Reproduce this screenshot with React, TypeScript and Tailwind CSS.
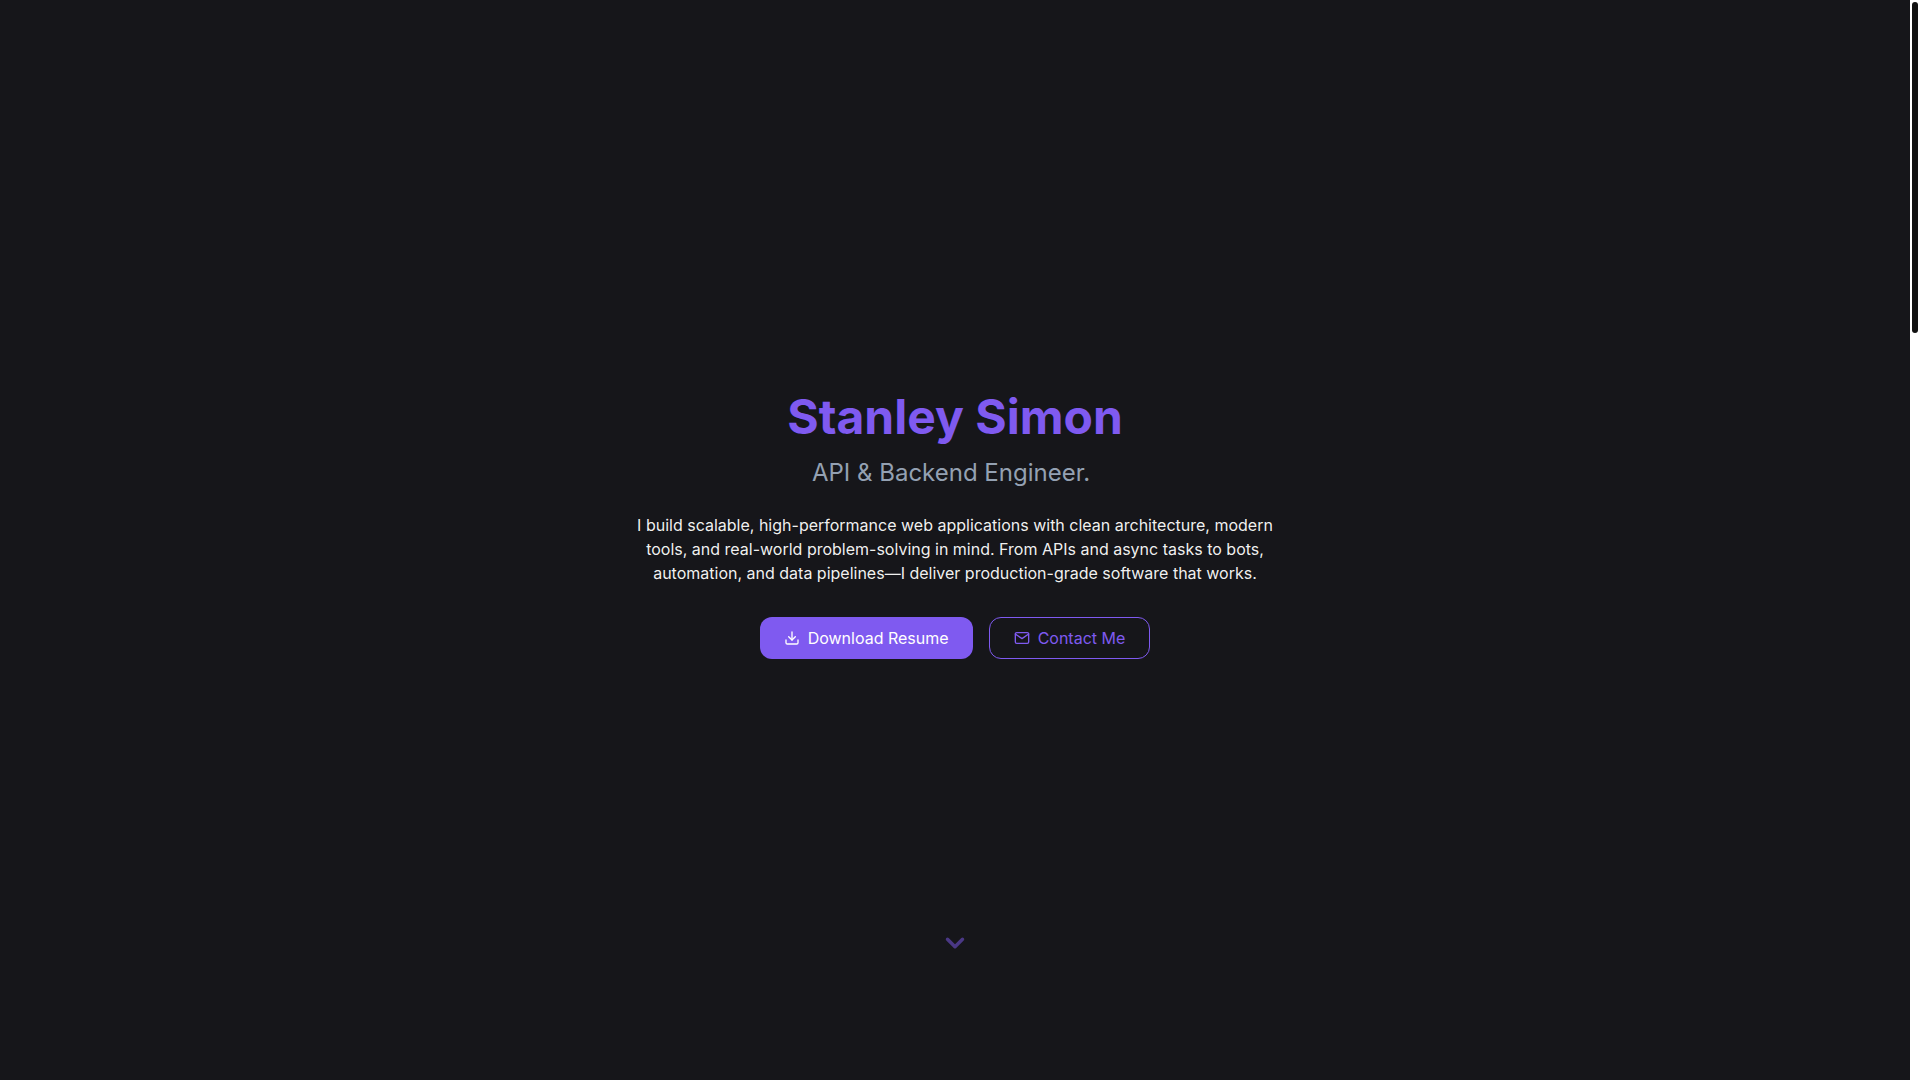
import { ChevronDown } from "lucide-react";
import { FiDownload, FiMail } from "react-icons/fi";

const INTRO =
  "I build scalable, high-performance web applications with clean architecture, modern tools, and real-world problem-solving in mind. From APIs and async tasks to bots, automation, and data pipelines—I deliver production-grade software that works.";

function ScrollTrack() {
  return (
    <div aria-hidden="true" className="h-screen w-[10px] shrink-0 bg-white p-0.5">
      <div className="h-[331px] rounded-full bg-[#111111]" />
    </div>
  );
}

function Hero() {
  return (
    <section
      id="home"
      className="relative flex min-h-screen flex-1 flex-col items-center justify-center px-4 pb-7 text-center"
    >
      <h1 className="mb-4 text-5xl font-bold text-[#7f5af0]">Stanley Simon</h1>
      <p className="mb-6 flex text-2xl text-[#94a1b2]">
        API &amp; Backend Engineer.
        <span aria-hidden="true" className="w-2" />
      </p>
      <p className="mb-8 max-w-2xl text-base text-[#fffffe]/95">{INTRO}</p>

      <div className="flex flex-wrap justify-center gap-4">
        <a
          href="#resume"
          className="flex items-center gap-2 rounded-xl bg-[#7f5af0] px-6 py-2 text-[#fffffe]"
        >
          <FiDownload className="size-4" />
          Download Resume
        </a>
        <a
          href="#contact"
          className="flex items-center gap-2 rounded-xl border border-[#7f5af0] px-6 py-2 text-[#7f5af0]"
        >
          <FiMail className="size-4" />
          Contact Me
        </a>
      </div>

      <a
        href="#about"
        aria-label="Scroll down"
        className="absolute bottom-[122px] text-[#7f5af0] opacity-50"
      >
        <ChevronDown className="size-[30px]" strokeWidth={2.75} />
      </a>
    </section>
  );
}

export default function App() {
  return (
    <main className="flex min-h-screen bg-[#16161a] font-['Inter',sans-serif]">
      <Hero />
      <ScrollTrack />
    </main>
  );
}
